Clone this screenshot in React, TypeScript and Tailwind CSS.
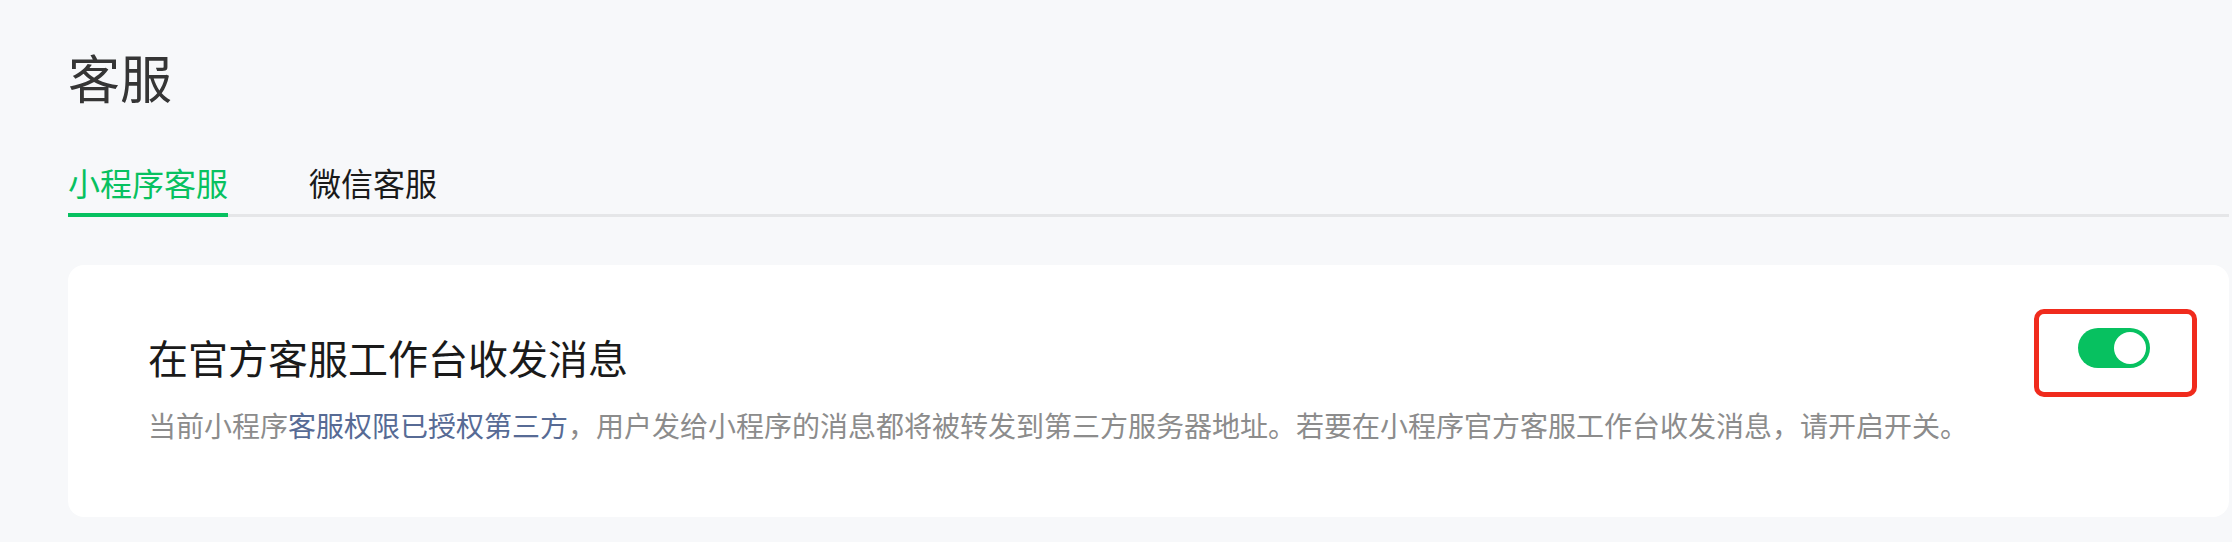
import React from "react";

export default function App() {
  const font = { fontFamily: '"Noto Sans CJK SC", "Noto Sans", sans-serif' };
  return (
    <div
      className="w-[2232px] h-[542px] bg-[#f7f8fa] pl-[68px] pr-[3px] pt-[41px] overflow-hidden"
      style={font}
    >
      <h1 className="text-[52px] leading-[72px] text-[#353535] font-normal">客服</h1>

      <div className="mt-[47px] flex gap-[81px] border-b-[3px] border-[#e5e6e8]">
        <div className="text-[32px] leading-[44px] text-[#07c160] pb-[9px] -mb-[3px] border-b-4 border-[#07c160]">
          小程序客服
        </div>
        <div className="text-[32px] leading-[44px] text-[#1a1a1a] pb-[9px]">微信客服</div>
      </div>

      <div className="mt-[48px] bg-white rounded-[16px] pl-[80px] pr-[79px] pt-[64px] pb-[72px] flex items-start justify-between">
        <div>
          <div className="text-[40px] leading-[56px] text-[#1a1a1a]">在官方客服工作台收发消息</div>
          <p className="mt-[20px] text-[28px] leading-[40px] text-[#8c8c8c] whitespace-nowrap">
            当前小程序<span className="text-[#576b95]">客服权限已授权第三方</span>
            ，用户发给小程序的消息都将被转发到第三方服务器地址。若要在小程序官方客服工作台收发消息，请开启开关。
          </p>
        </div>
        <div className="relative mt-[-1px]">
          <div className="w-[72px] h-[40px] rounded-full bg-[#07c160] flex items-center justify-end pr-[4px]">
            <div className="w-[32px] h-[32px] rounded-full bg-white" />
          </div>
          <div className="absolute left-[-44px] top-[-19px] w-[163px] h-[88px] border-[5px] border-[#f02b1d] rounded-[10px]" />
        </div>
      </div>
    </div>
  );
}
